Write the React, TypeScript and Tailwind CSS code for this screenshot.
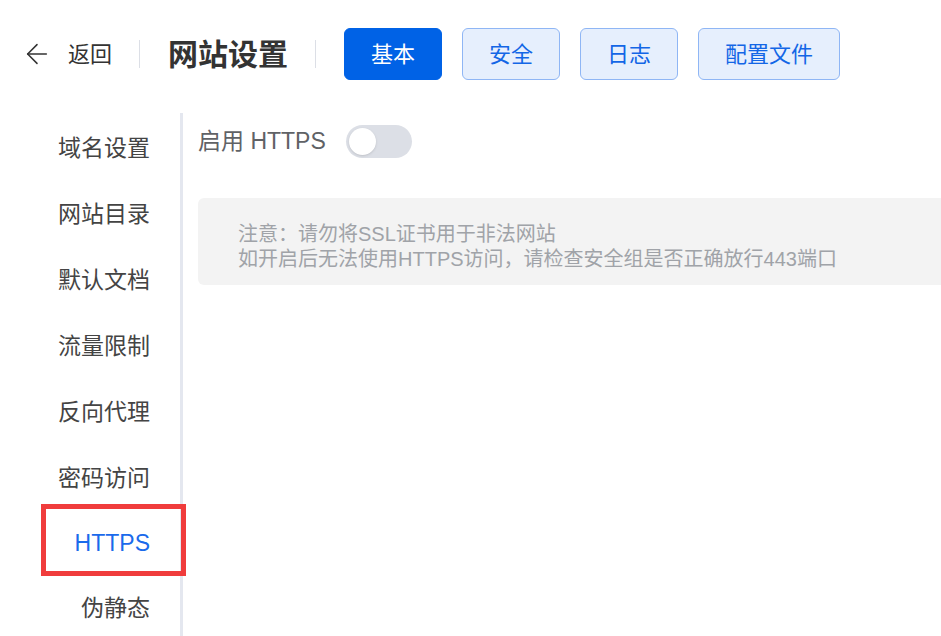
import { ArrowLeft } from "lucide-react";

const menu = ["域名设置", "网站目录", "默认文档", "流量限制", "反向代理", "密码访问", "HTTPS", "伪静态"];
const tabs = ["基本", "安全", "日志", "配置文件"];

export default function App() {
  return (
    <div className="h-[636px] w-[941px] overflow-hidden bg-white font-['Liberation_Sans','Noto_Sans_CJK_SC',sans-serif] text-[#333]">
      <header className="flex h-[52px] items-center pl-[21px] mt-[28px]">
        <ArrowLeft size={32} strokeWidth={1.15} className="text-[#333]" />
        <span className="ml-[15px] text-[22px] text-[#333]">返回</span>
        <div className="ml-[27px] h-[28px] w-px bg-[#dcdfe6]" />
        <h1 className="ml-[28px] text-[30px] font-bold text-[#333]">网站设置</h1>
        <div className="ml-[27px] h-[28px] w-px bg-[#dcdfe6]" />
        <nav className="ml-[28px] flex gap-[20px]">
          {tabs.map((t, i) =>
            i === 0 ? (
              <button
                key={t}
                className="h-[52px] rounded-[6px] border border-[#0062e6] bg-[#0062e6] px-[26px] text-[22px] text-white"
              >
                {t}
              </button>
            ) : (
              <button
                key={t}
                className="h-[52px] rounded-[6px] border border-[#8fb6f5] bg-[#e6effd] px-[26px] text-[22px] text-[#1366e6]"
              >
                {t}
              </button>
            )
          )}
        </nav>
      </header>

      <div className="mt-[33px] flex">
        <aside className="w-[183px] shrink-0 border-r-[3px] border-[#e4e7ef] pt-[2px] pb-[40px]">
          {menu.map((m) =>
            m === "HTTPS" ? (
              <div key={m} className="relative flex h-[64px] items-center justify-end pr-[30px] text-[23px] text-[#1a6aeb]">
                {m}
                <div className="absolute left-[41px] top-[-7px] h-[72px] w-[145px] border-[5px] border-[#f03c3c]" />
              </div>
            ) : (
              <div key={m} className="flex h-[66px] items-center justify-end pr-[30px] text-[23px] text-[#444]">
                {m}
              </div>
            )
          )}
        </aside>

        <main className="flex-1 pl-[15px] pt-[11px]">
          <div className="flex items-center">
            <span className="text-[23px] text-[#606266]">启用 HTTPS</span>
            <div className="ml-[20px] flex h-[33px] w-[66px] items-center rounded-full bg-[#dcdfe6] px-[3px]">
              <div className="h-[27px] w-[27px] rounded-full bg-white shadow-sm" />
            </div>
          </div>

          <div className="mt-[39px] w-[800px] rounded-[6px] bg-[#f3f3f3] pl-[40px] pt-[24px] pb-[13px] text-[20px] leading-[25px] text-[#a0a3a8]">
            <p>注意：请勿将SSL证书用于非法网站</p>
            <p>如开启后无法使用HTTPS访问，请检查安全组是否正确放行443端口</p>
          </div>
        </main>
      </div>
    </div>
  );
}
